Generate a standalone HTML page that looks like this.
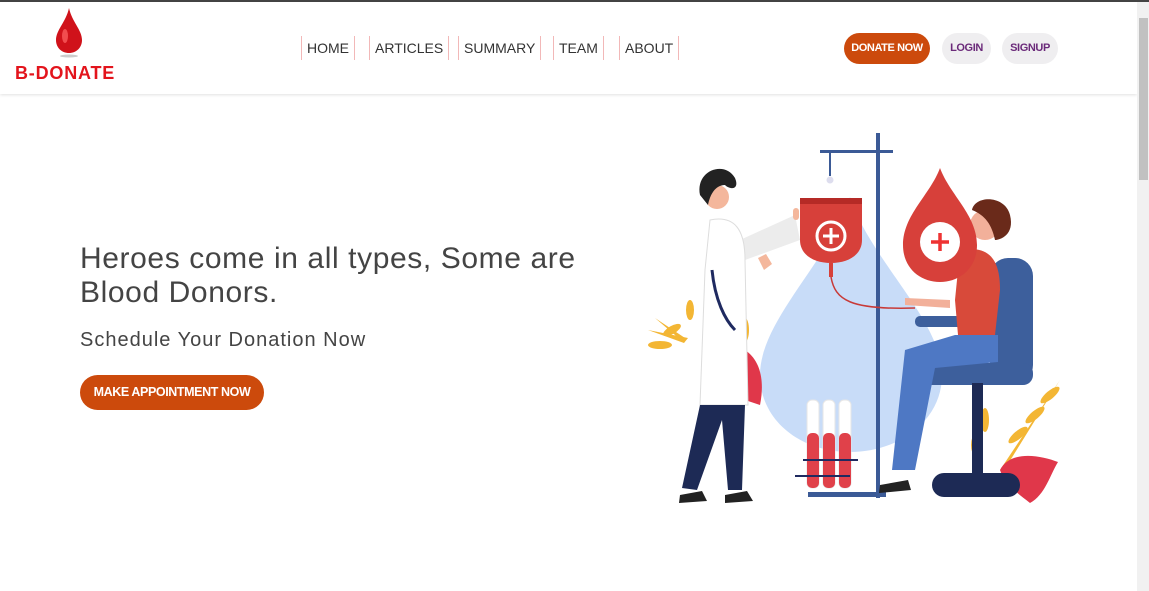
<!DOCTYPE html>
<html><head><meta charset="utf-8"><style>
*{margin:0;padding:0;box-sizing:border-box}
body{width:1149px;height:591px;overflow:hidden;background:#fff;font-family:"Liberation Sans",sans-serif;position:relative}
.topline{position:absolute;left:0;top:0;width:1149px;height:2px;background:#444}
.header{position:absolute;left:0;top:2px;width:1137px;height:92px;background:#fff;box-shadow:0 1px 3px rgba(0,0,0,.12)}
.nav a{position:absolute;top:34px;height:24px;line-height:24px;font-size:14px;color:#333;border-left:1.5px solid #f2b8b8;border-right:1.5px solid #f2b8b8;padding:0 5px;text-decoration:none}
.btn{position:absolute;border-radius:16px;font-weight:bold;font-size:11px;text-align:center;letter-spacing:-.4px}
.sb{position:absolute;right:0;top:2px;width:12px;height:589px;background:#f1f1f1}
.sb div{position:absolute;left:2px;top:16px;width:9px;height:162px;background:#c1c1c1}
h1{position:absolute;left:80px;top:242px;font-weight:normal;font-size:30px;line-height:34px;color:#444;letter-spacing:.6px}
h3{position:absolute;left:80px;top:329px;font-weight:normal;font-size:20px;color:#444;letter-spacing:1px}
</style></head><body>
<div class="topline"></div>
<div class="header">
<svg style="position:absolute;left:14px;top:4px" width="110" height="80">
<path d="M55 2 C52 16 42 24 42 34 C42 42 48 47 55 47 C62 47 68 42 68 34 C68 24 58 16 55 2Z" fill="#d0121a"/>
<ellipse cx="51" cy="30" rx="3" ry="7" fill="#f66" opacity=".7"/>
<ellipse cx="55" cy="50" rx="9" ry="1.5" fill="#999" opacity=".5"/>
<text x="1" y="73" font-family="Liberation Sans" font-weight="bold" font-size="18" fill="#e3141c" letter-spacing="0.8">B-DONATE</text>
</svg>
<div class="nav">
<a style="left:301px">HOME</a>
<a style="left:369px">ARTICLES</a>
<a style="left:458px">SUMMARY</a>
<a style="left:553px">TEAM</a>
<a style="left:619px">ABOUT</a>
</div>
<div class="btn" style="left:844px;top:31px;width:86px;height:31px;line-height:31px;background:#cc4a0c;color:#fff">DONATE NOW</div>
<div class="btn" style="left:942px;top:31px;width:49px;height:31px;line-height:31px;background:#efeef0;color:#6b2a7a">LOGIN</div>
<div class="btn" style="left:1002px;top:31px;width:56px;height:31px;line-height:31px;background:#efeef0;color:#6b2a7a">SIGNUP</div>
</div>
<h1>Heroes come in all types, Some are<br>Blood Donors.</h1>
<h3>Schedule Your Donation Now</h3>
<div class="btn" style="left:80px;top:375px;width:184px;height:35px;line-height:35px;background:#cc4a0c;color:#fff;font-size:12.5px;border-radius:18px">MAKE APPOINTMENT NOW</div>
<svg style="position:absolute;left:0;top:0" width="1137" height="591">
<path d="M850 197 C830 260 760 320 760 375 C760 420 800 452 850 452 C900 452 942 420 942 375 C942 320 870 260 850 197Z" fill="#c8dcf8"/>
<g fill="#f3b634"><path d="M648 330 l40 8 l-4 5Z"/><path d="M655 318 l30 20 l-3 3Z"/><ellipse cx="660" cy="345" rx="12" ry="4"/><ellipse cx="672" cy="330" rx="10" ry="4" transform="rotate(-30 672 330)"/><ellipse cx="690" cy="310" rx="4" ry="10"/><ellipse cx="745" cy="330" rx="4" ry="12"/>
<path d="M1060 380 l-60 90 l3 2Z"/><ellipse cx="1050" cy="395" rx="12" ry="4" transform="rotate(-40 1050 395)"/><ellipse cx="1035" cy="415" rx="12" ry="4" transform="rotate(-40 1035 415)"/><ellipse cx="1018" cy="435" rx="12" ry="4" transform="rotate(-40 1018 435)"/><ellipse cx="985" cy="420" rx="4" ry="12"/><ellipse cx="975" cy="445" rx="4" ry="10"/></g>
<path d="M1000 470 C1010 450 1040 455 1058 462 C1050 475 1045 495 1030 503 C1020 495 1005 485 1000 470Z" fill="#e0374a"/>
<path d="M745 350 C760 360 765 380 760 405 L745 400Z" fill="#e0374a"/>
<rect x="820" y="150" width="73" height="3" fill="#3b5a96"/><rect x="876" y="133" width="4" height="365" fill="#3b5a96"/>
<rect x="829" y="152" width="2" height="24" fill="#3b5a96"/><circle cx="830" cy="180" r="3.5" fill="#dde"/>
<rect x="808" y="492" width="78" height="5" fill="#3b5a96"/>
<path d="M800 200 L862 200 L862 240 C862 255 848 263 831 263 C814 263 800 255 800 240Z" fill="#d7403a"/>
<rect x="800" y="198" width="62" height="6" fill="#b52a26"/>
<circle cx="831" cy="236" r="14" fill="none" stroke="#fff" stroke-width="3"/><path d="M831 228v16M823 236h16" stroke="#fff" stroke-width="3"/>
<rect x="829" y="263" width="4" height="14" fill="#d7403a"/>
<path d="M831 277 C835 300 850 310 915 308" fill="none" stroke="#c83a38" stroke-width="1.5"/>
<rect x="807" y="400" width="12" height="88" rx="5" fill="#fff" stroke="#e6e6e6"/><rect x="823" y="400" width="12" height="88" rx="5" fill="#fff" stroke="#e6e6e6"/><rect x="839" y="400" width="12" height="88" rx="5" fill="#fff" stroke="#e6e6e6"/>
<rect x="807" y="433" width="12" height="55" rx="5" fill="#e0414a"/><rect x="823" y="433" width="12" height="55" rx="5" fill="#e0414a"/><rect x="839" y="433" width="12" height="55" rx="5" fill="#e0414a"/>
<path d="M803 460h55M795 476h55" stroke="#1f2a60" stroke-width="2"/>
<rect x="990" y="258" width="43" height="125" rx="18" fill="#3d5f9c"/>
<rect x="913" y="363" width="120" height="22" rx="10" fill="#3d5f9c"/>
<rect x="915" y="316" width="82" height="11" rx="5" fill="#3d5f9c"/>
<rect x="972" y="383" width="11" height="92" fill="#1d2a55"/>
<rect x="932" y="473" width="88" height="24" rx="12" fill="#1d2a55"/>
<path d="M960 250 C990 245 1000 260 1000 290 L995 335 L958 335 L955 300 Z" fill="#d84a3a"/>
<path d="M955 335 L998 335 L998 362 L935 368 L915 470 L892 470 L905 350 Z" fill="#4e78c4"/>
<path d="M880 485 l28 -5 l3 10 l-32 3Z" fill="#222"/>
<path d="M905 298 L950 300 L950 308 L905 305Z" fill="#f2b09a"/>
<circle cx="985" cy="225" r="15" fill="#f2b09a"/>
<path d="M972 210 C975 195 1005 195 1010 215 C1015 235 1000 240 995 240 C992 225 985 215 972 210Z" fill="#6a2a1a"/>
<path d="M940 168 C930 195 903 215 903 245 C903 268 920 282 940 282 C960 282 977 268 977 245 C977 215 950 195 940 168Z" fill="#d7403a"/>
<circle cx="940" cy="242" r="20" fill="#fff"/><path d="M940 233v18M931 242h18" stroke="#e33" stroke-width="3.5"/>
<path d="M740 240 L795 215 L800 240 L745 260Z" fill="#ececec"/>
<path d="M710 220 C735 215 745 230 745 260 L748 405 L700 405 L705 270Z" fill="#fff" stroke="#ddd"/>
<path d="M712 270 C715 300 725 320 735 330" stroke="#1f2a60" stroke-width="3" fill="none"/>
<path d="M700 405 L745 405 L742 490 L728 490 L722 420 L697 490 L682 488Z" fill="#1d2a55"/>
<path d="M680 495 l22 -4 l5 10 l-28 2Z M725 495 l22 -4 l6 10 l-28 2Z" fill="#222"/>
<circle cx="717" cy="197" r="12" fill="#f4b79c"/>
<path d="M700 195 C695 170 725 160 735 178 C740 190 730 190 725 185 C715 185 710 195 708 205Z" fill="#222"/>
<rect x="793" y="208" width="6" height="12" rx="3" fill="#f4b79c"/>
<path d="M758 258 l8 -4 l6 10 l-8 6Z" fill="#f4b79c"/>
</svg>
<div class="sb"><div></div></div>
</body></html>
